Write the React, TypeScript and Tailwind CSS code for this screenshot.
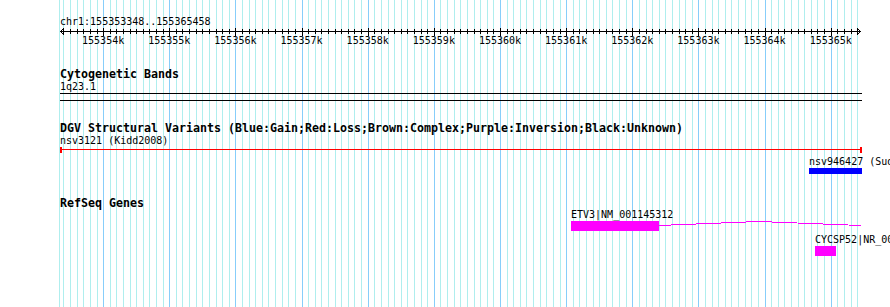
const START = 155353348;
const END = 155365458;
const LEFT = 60;
const SCALE = 801 / (END - START);
const px = (bp: number) => LEFT + (bp - START) * SCALE;
const col = (bp: number) => Math.round(px(bp)) + 0.5;

const ticks: number[] = [];
for (let bp = 155353400; bp <= END; bp += 100) ticks.push(bp);
const majors = ticks.filter(b => b % 1000 === 0);

function Grid() {
  return (
    <svg className="absolute inset-0 pointer-events-none" width={890} height={307} shapeRendering="crispEdges">
      <line x1={59.5} x2={59.5} y1={0} y2={307} stroke="#afeeee" />
      {ticks.map(bp => (
        <line
          key={bp}
          x1={col(bp)}
          x2={col(bp)}
          y1={0}
          y2={307}
          stroke={bp % 1000 === 0 ? '#87cefa' : '#afeeee'}
        />
      ))}
    </svg>
  );
}

function Ruler() {
  return (
    <svg width={890} height={20} shapeRendering="crispEdges" className="block text-[10px]">
      <line x1={60} x2={861} y1={4.5} y2={4.5} stroke="#000" />
      <polyline points="64,1 60.5,4.5 64,8" fill="none" stroke="#000" shapeRendering="auto" />
      <polyline points="857,1 860.5,4.5 857,8" fill="none" stroke="#000" shapeRendering="auto" />
      {ticks.map(bp => (
        <line
          key={bp}
          x1={col(bp)}
          x2={col(bp)}
          y1={bp % 1000 === 0 ? 1 : 2}
          y2={bp % 1000 === 0 ? 9 : 7}
          stroke="#000"
        />
      ))}
      {majors.map(bp => (
        <text key={bp} x={px(bp)} y={17} textAnchor="middle" fill="#000" shapeRendering="auto">
          {Math.round(bp / 1000)}k
        </text>
      ))}
    </svg>
  );
}

function TrackTitle({ children, className = '' }: { children: string; className?: string }) {
  return <div className={`pl-[60px] h-[12px] leading-[12px] text-[11.63px] font-bold text-black whitespace-nowrap ${className}`}>{children}</div>;
}

function SmallText({ children, className = '' }: { children: string; className?: string }) {
  return <div className={`pl-[60px] h-[11px] leading-[11px] text-[10px] text-black whitespace-nowrap ${className}`}>{children}</div>;
}

export default function App() {
  return (
    <div className="relative w-[890px] h-[307px] bg-white overflow-hidden font-['DejaVu_Sans_Mono',monospace]">
      <Grid />
      <div className="relative flex flex-col">
        {/* ruler */}
        <SmallText className="mt-[16px]">chr1:155353348..155365458</SmallText>
        <Ruler />

        {/* cytogenetic bands */}
        <TrackTitle className="mt-[21px]">Cytogenetic Bands</TrackTitle>
        <SmallText className="mt-[1px]">1q23.1</SmallText>
        <svg width={890} height={10} shapeRendering="crispEdges" className="block">
          <line x1={60} x2={862} y1={1.5} y2={1.5} stroke="#000" />
          <line x1={60} x2={862} y1={8.5} y2={8.5} stroke="#000" />
        </svg>

        {/* DGV */}
        <TrackTitle className="mt-[20px]">DGV Structural Variants (Blue:Gain;Red:Loss;Brown:Complex;Purple:Inversion;Black:Unknown)</TrackTitle>
        <SmallText className="mt-[1px]">nsv3121 (Kidd2008)</SmallText>
        <svg width={890} height={30} shapeRendering="crispEdges" className="block text-[10px]">
          <line x1={60} x2={861} y1={3.5} y2={3.5} stroke="#ff0000" />
          <rect x={60} y={1} width={2} height={6} fill="#ff0000" />
          <rect x={860} y={1} width={2} height={6} fill="#ff0000" />
          <text x={809} y={19} fill="#000" shapeRendering="auto">nsv946427 (Sudmant2013)</text>
          <rect x={809} y={22} width={53} height={6} fill="#0000ff" />
        </svg>

        {/* RefSeq */}
        <TrackTitle className="mt-[21px]">RefSeq Genes</TrackTitle>
        <svg width={890} height={50} shapeRendering="crispEdges" className="block text-[10px]">
          <text x={571} y={9} fill="#000" shapeRendering="auto">ETV3|NM_001145312</text>
          <rect x={571} y={12} width={88} height={10} fill="#ff00ff" />
          <polyline points="659,16.5 759,12.5 861,16.5" fill="none" stroke="#ff00ff" />
          <text x={815} y={34} fill="#000" shapeRendering="auto">CYCSP52|NR_003551</text>
          <rect x={815} y={37} width={21} height={10} fill="#ff00ff" />
        </svg>
      </div>
    </div>
  );
}
